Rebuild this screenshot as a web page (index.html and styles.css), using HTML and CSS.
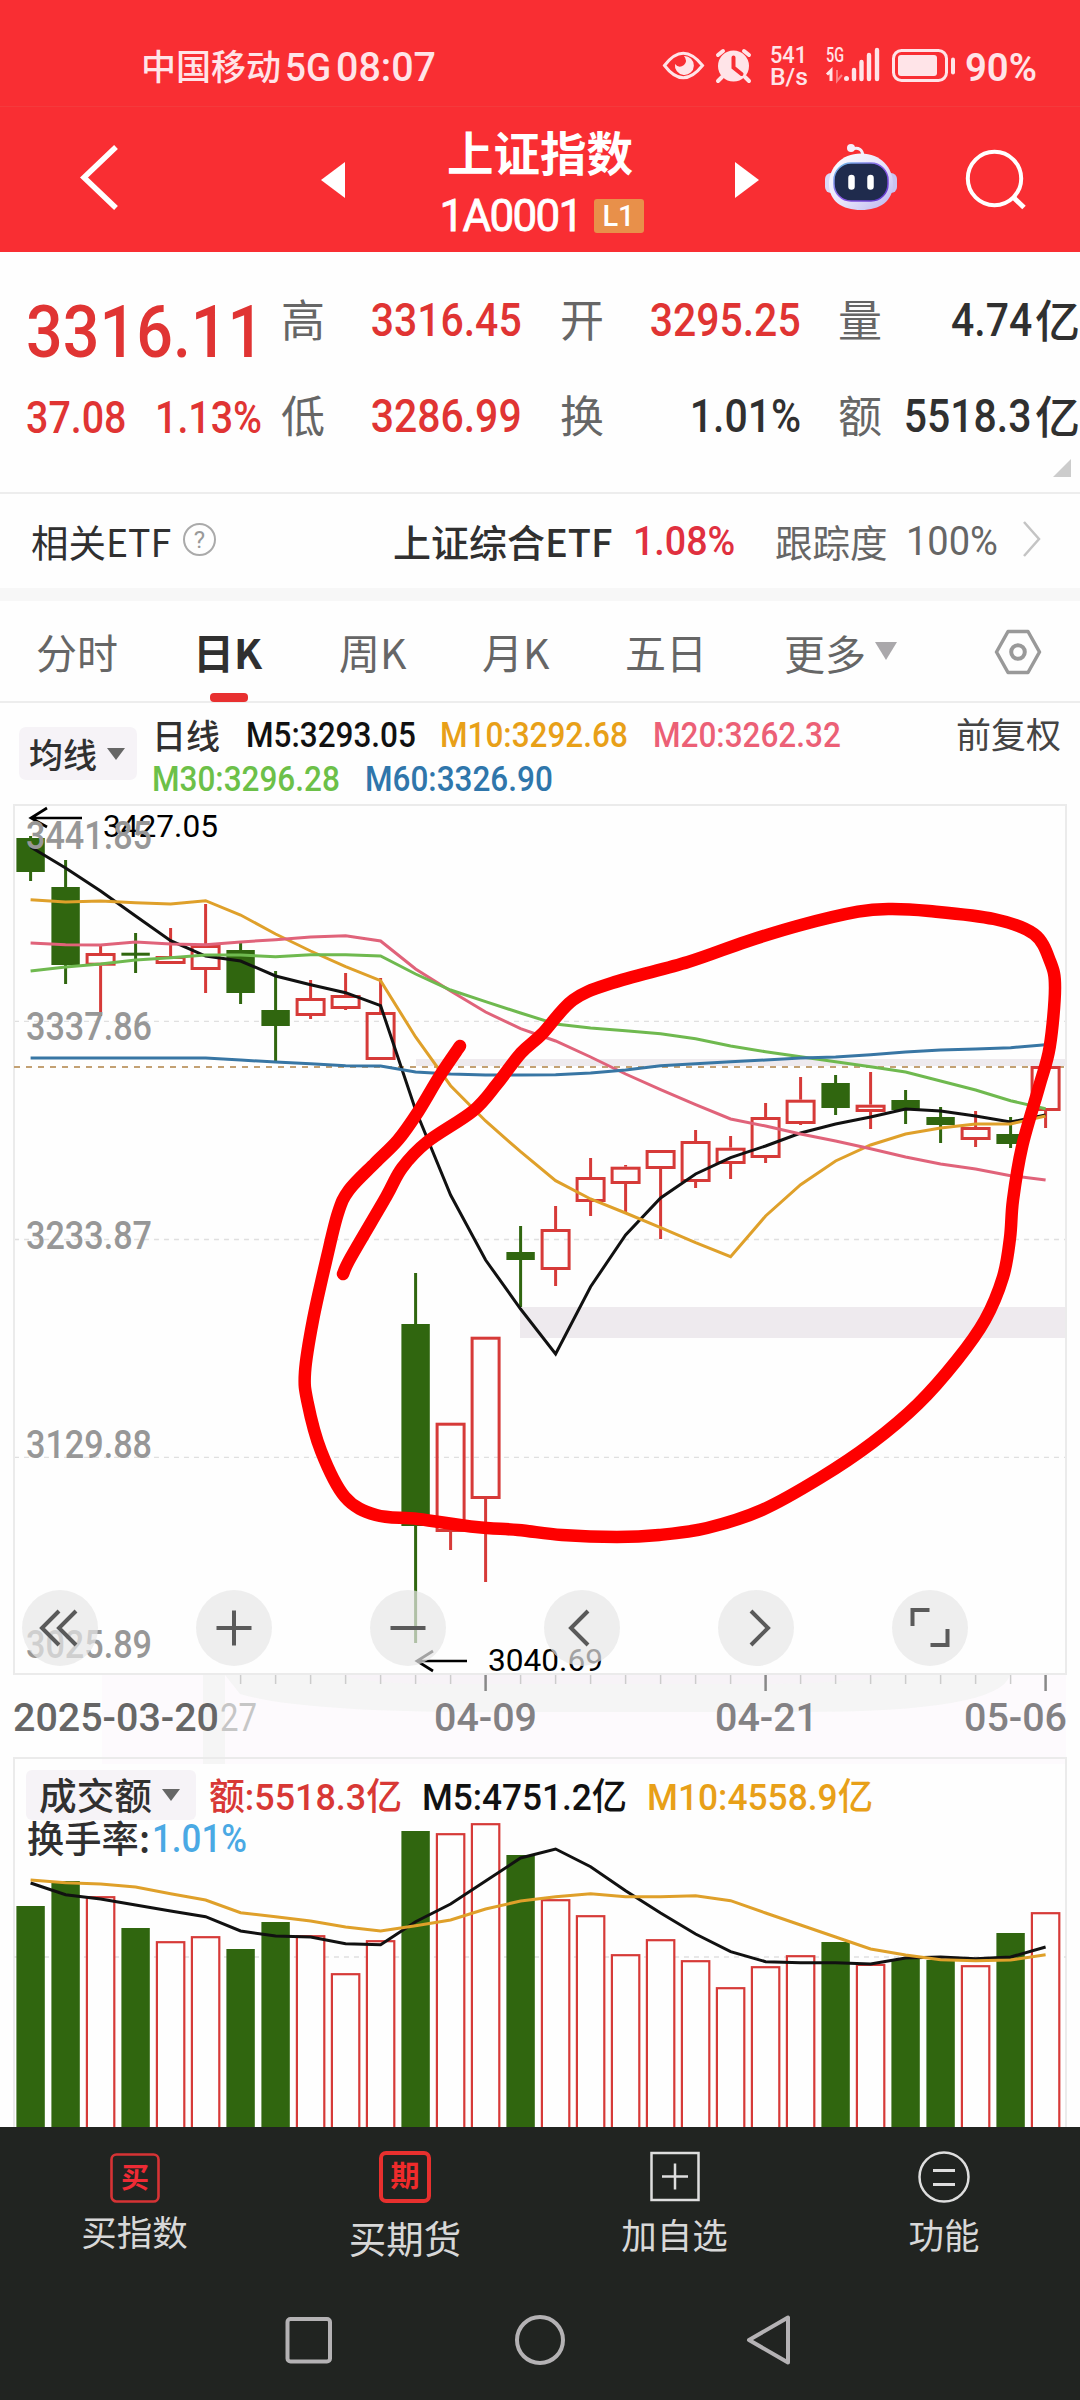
FILE: index.html
```html
<!DOCTYPE html>
<html lang="zh-CN">
<head>
<meta charset="utf-8">
<title>上证指数</title>
<link rel="stylesheet" href="styles.css">
</head>
<body>
<header class="top">
  <div class="status">
    <svg class="status-svg" viewBox="130 30 950 77">
      <g class="pale">
        <text x="141" y="80" font-size="35" textLength="140" lengthAdjust="spacingAndGlyphs" class="cjk">中国移动</text>
        <text x="285" y="81" font-size="39" textLength="46" lengthAdjust="spacingAndGlyphs" class="num">5G</text>
        <text x="336" y="81" font-size="40" textLength="100" lengthAdjust="spacingAndGlyphs" class="num">08:07</text>
        <text x="770" y="63" font-size="24" textLength="37" lengthAdjust="spacingAndGlyphs" class="num">541</text>
        <text x="770" y="85" font-size="24" textLength="38" lengthAdjust="spacingAndGlyphs" class="num">B/s</text>
        <text x="826" y="62" font-size="20" textLength="18" lengthAdjust="spacingAndGlyphs" class="num">5G</text>
        <text x="965" y="81" font-size="39" textLength="72" lengthAdjust="spacingAndGlyphs" class="num heavy">90%</text>
        <path d="M664.500 65.500Q683 41 702.500 65.500Q683 90 664.500 65.500Z" fill="none" stroke="#ffe4e8" stroke-width="3"/>
        <path d="M684 56a9.500 9.500 0 1 1-9 8q4 5 9 1q4-4 0-9Z"/>
        <path d="M722 77l-4 4M745 77l4 4" stroke="#ffe4e8" stroke-width="4" stroke-linecap="round"/>
        <circle cx="733.500" cy="66" r="15.500"/>
        <path d="M718 55l5-4M744 51l5 4" stroke="#ffe4e8" stroke-width="4" stroke-linecap="round"/>
        <path d="M733.500 57.500v10l8 6.500" stroke="#f72e33" stroke-width="4" stroke-linecap="round" fill="none"/>
        <path d="M831 81v-10.500l-4 4" fill="none" stroke="#ffe4e8" stroke-width="3"/>
        <path d="M837 70v11l5-6" fill="none" stroke="#fc8085" stroke-width="2"/>
        <circle cx="846.500" cy="78.500" r="2.500"/>
        <path d="M854 70v9M861.500 62v17M869 55v24M877 50v29" stroke="#ffe4e8" stroke-width="4.400" stroke-linecap="round"/>
        <rect x="893.500" y="50.500" width="53" height="30" rx="8" fill="none" stroke="#ffe4e8" stroke-width="3"/>
        <rect x="898" y="55" width="39" height="21" rx="3"/>
        <path d="M953 59.500v13" stroke="#ffe4e8" stroke-width="4" stroke-linecap="round"/>
      </g>
    </svg>
  </div>
  <nav class="titlebar">
    <svg class="back" viewBox="78 140 44 76"><path d="M116 147 84 177.500 116 208" fill="none" stroke="#fff" stroke-width="5.500"/></svg>
    <svg class="tri" viewBox="0 0 24 36"><path d="M24 0v36L0 18Z" fill="#fff"/></svg>
    <div class="title">
      <h1>上证指数</h1>
      <p><span class="code">1A0001</span><span class="badge">L1</span></p>
    </div>
    <svg class="tri" viewBox="0 0 24 36"><path d="M0 0v36L24 18Z" fill="#fff"/></svg>
    <svg class="robot" viewBox="824 142 74 70">
      <defs>
        <linearGradient id="shell" x1="0" y1="0" x2="1" y2="1"><stop offset="0" stop-color="#fff"/><stop offset=".55" stop-color="#e6e3fb"/><stop offset="1" stop-color="#b9b3ee"/></linearGradient>
        <linearGradient id="rim" x1="0" y1="0" x2="1" y2="1"><stop offset="0" stop-color="#6fc6e8"/><stop offset=".5" stop-color="#8d5be8"/><stop offset="1" stop-color="#5b35c9"/></linearGradient>
      </defs>
      <path d="M852 149q10-3 11 7" fill="none" stroke="#f3effb" stroke-width="3"/>
      <circle cx="851" cy="148" r="4" fill="#f6eefb"/>
      <rect x="825" y="173" width="12" height="20" rx="6" fill="#dcd8f6"/>
      <rect x="885" y="173" width="12" height="20" rx="6" fill="#c9c3f0"/>
      <path d="M861 153.500C881 153.500 893 168 893 184C893 201 880 210 861 210C842 210 829 201 829 184C829 168 841 153.500 861 153.500Z" fill="url(#shell)"/>
      <rect x="834" y="163" width="54" height="38" rx="17" fill="#1f2b4d" stroke="url(#rim)" stroke-width="1.500"/>
      <path d="M851.500 178v8.500M870.500 178v8.500" stroke="#fff" stroke-width="6.500" stroke-linecap="round"/>
    </svg>
    <svg class="search" viewBox="964 148 64 64"><circle cx="994.500" cy="178.500" r="26.700" fill="none" stroke="#fff" stroke-width="4"/><path d="M1013 197 1024 207.500" stroke="#fff" stroke-width="5"/></svg>
  </nav>
</header>

<section class="quote">
  <div class="last"><b class="price red">3316.11</b></div>
  <span class="k">高</span><span class="v red"><i>3316.45</i></span>
  <span class="k">开</span><span class="v red"><i>3295.25</i></span>
  <span class="k">量</span><span class="v"><i>4.74</i><em>亿</em></span>
  <div class="chg red"><i>37.08</i><i>1.13%</i></div>
  <span class="k">低</span><span class="v red"><i>3286.99</i></span>
  <span class="k">换</span><span class="v"><i>1.01%</i></span>
  <span class="k">额</span><span class="v"><i>5518.3</i><em>亿</em></span>
  <svg class="corner" viewBox="0 0 18 18"><path d="M18 0v18H0Z" fill="#ccc"/></svg>
</section>

<section class="etf">
  <span class="etf-name">相关ETF</span><span class="help">?</span>
  <span class="etf-fund">上证综合ETF</span>
  <span class="etf-pct">1.08%</span>
  <span class="etf-track">跟踪度</span>
  <span class="etf-full">100%</span>
  <svg class="chev" viewBox="0 0 20 36"><path d="M2 1 17 18 2 35" fill="none" stroke="#c4c4c4" stroke-width="2.500"/></svg>
</section>

<nav class="tabs">
  <span>分时</span><span class="on">日K</span><span>周K</span><span>月K</span><span>五日</span>
  <span class="more">更多<svg viewBox="0 0 22 18"><path d="M0 0h22L11 18Z" fill="#aaa8ab"/></svg></span>
  <svg class="hex" viewBox="0 0 48 46"><path d="M14 2.500h20L45.500 23 34 43.500H14L2.500 23Z" fill="none" stroke="#999" stroke-width="3.500" stroke-linejoin="round"/><circle cx="24" cy="23" r="6.800" fill="none" stroke="#999" stroke-width="4"/></svg>
</nav>

<section class="legend">
  <div class="pick">均线<svg viewBox="0 0 18 12"><path d="M0 0h18L9 12Z" fill="#666"/></svg></div>
  <div class="mas">
    <div class="r1"><span class="lbl">日线</span><i class="m5">M5:3293.05</i><i class="m10">M10:3292.68</i><i class="m20">M20:3262.32</i></div>
    <div class="r2"><i class="m30">M30:3296.28</i><i class="m60">M60:3326.90</i></div>
  </div>
  <span class="adj">前复权</span>
</section>

<section class="chart">
  <svg id="kline" viewBox="0 804 1080 946"></svg>
  <div class="tools">
    <button><svg viewBox="-38 -38 76 76"><path d="M-1-17-18 0-1 17M16-17-1 0 16 17"/></svg></button>
    <button><svg viewBox="-38 -38 76 76"><path d="M-17.500 0h35M0-17.500v35"/></svg></button>
    <button><svg viewBox="-38 -38 76 76"><path d="M-17.500 0h35"/></svg></button>
    <button><svg viewBox="-38 -38 76 76"><path d="M6-17-11 0 6 17"/></svg></button>
    <button><svg viewBox="-38 -38 76 76"><path d="M-5-17 12 0-5 17"/></svg></button>
    <button><svg viewBox="-38 -38 76 76"><path d="M-17.500-2v-16h17M17.500 1v16h-17"/></svg></button>
  </div>
</section>
<section class="volume"><svg id="vol" viewBox="0 1750 1080 377"></svg></section>

<footer class="dock">
  <div class="actions">
    <div><svg viewBox="0 0 52 54"><rect x="2.500" y="5.500" width="47" height="47" rx="5" fill="none" stroke="#d63335" stroke-width="2.600"/><text x="26" y="39" font-size="28" text-anchor="middle" class="cjk bold" fill="#ef2b35">买</text></svg><span>买指数</span></div>
    <div class="big"><svg viewBox="0 0 52 54"><rect x="2" y="4" width="48" height="48" rx="5" fill="none" stroke="#e8302e" stroke-width="4"/><text x="26" y="38" font-size="29" text-anchor="middle" class="cjk bold" fill="#ef2b2b">期</text></svg><span>买期货</span></div>
    <div class="mid"><svg viewBox="0 0 52 54"><path d="M2.500 4h47v47h-47ZM26 14.500v26M13 27.500h26" fill="none" stroke="#dedede" stroke-width="2.500"/></svg><span>加自选</span></div>
    <div class="mid"><svg viewBox="0 0 52 54"><circle cx="26" cy="28" r="24.500" fill="none" stroke="#dedede" stroke-width="2.500"/><path d="M15 21.500h22M15 35.500h22" stroke="#dedede" stroke-width="3"/></svg><span>功能</span></div>
  </div>
  <div class="sys">
    <svg viewBox="0 0 52 52"><rect x="5.500" y="5" width="42.500" height="42.500" rx="3" /></svg>
    <svg viewBox="0 0 52 52"><circle cx="26" cy="26" r="23"/></svg>
    <svg viewBox="0 0 52 52"><path d="M42 3.500v45L3 26Z" stroke-linejoin="round"/></svg>
  </div>
</footer>
<script src="chart.js"></script>
</body>
</html>
```
FILE: styles.css
```css
* { box-sizing: border-box; margin: 0; padding: 0; }
body {
  width: 1080px; height: 2400px; overflow: hidden; background: #fefefe; color: #303030;
  font-family: "Noto Sans CJK SC", sans-serif; display: flex; flex-direction: column;
}
svg { display: block; }
i, em { font-style: normal; }
.cjk { font-family: "Noto Sans CJK SC", sans-serif; font-weight: 500; }
.bold { font-weight: 700; }
.num { font-family: Roboto, sans-serif; font-weight: 500; }
.thin { font-weight: 400; }
.heavy { font-weight: 600; }
.pale { fill: #ffe4e8; }
.red { color: #e03433 !important; }

.top { height: 252px; background: #f92e33; flex: none; }
.status { height: 107px; padding: 30px 0 0 130px; border-bottom: 1px solid #f53a3c; }
.status-svg { width: 950px; height: 77px; }
.titlebar {
  height: 145px; display: grid; align-items: start;
  grid-template-columns: 243px 24px 390px 24px 87px 140px 64px; padding-left: 78px;
  color: #fff;
}
.back { width: 44px; height: 76px; margin-top: 33px; }
.tri { width: 24px; height: 36px; margin-top: 55px; }
.robot { width: 74px; height: 70px; margin: 35px 0 0 -22px; grid-column: 6; }
.search { width: 64px; height: 64px; margin-top: 41px; grid-column: 7; margin-left: -22px; }
.title { text-align: center; padding-top: 14px; }
.title h1 { font-size: 46.5px; line-height: 60px; font-weight: 700; }
.title p { display: flex; align-items: center; justify-content: center; gap: 15px; height: 34px; margin: 18px 0 0 3px; }
.code { font: 400 44px/36px Roboto, sans-serif; width: 139px; letter-spacing: -1.7px; -webkit-text-stroke: .8px #fff; text-align: left; }
.badge { width: 50px; height: 34px; border-radius: 3px; background: #e8904a; font: 500 29px/35px Roboto, sans-serif; }

.quote {
  height: 242px; flex: none; border-bottom: 2px solid #ededed; padding-left: 26px; display: grid;
  grid-template-columns: 257px 42px 197px 40px 42px 197px 39px 42px 198px;
  grid-template-rows: 96px 96px 1fr; padding-top: 19px; align-items: center; white-space: nowrap;
}
.quote .k { font-size: 44px; line-height: 60px; color: #666; width: 44px; margin: -2px 0 0 -2px; }
.quote .v { text-align: right; display: flex; justify-content: flex-end; align-items: center; padding-top: 2px; }
.quote .k:nth-of-type(1) { grid-column: 2; }
.quote i { font: 500 46px/54px Roboto, sans-serif; display: inline-block; transform: scaleX(.89); transform-origin: right; }
.quote em { font-size: 45px; line-height: 54px; font-weight: 500; margin: -3px 0 0 3px; }
.quote .k:nth-child(4), .quote .k:nth-child(11) { grid-column: 5; }
.quote .k:nth-child(6), .quote .k:nth-child(13) { grid-column: 8; }
.price { font: 500 73px/80px Roboto, sans-serif; display: inline-block; transform: scaleX(.885); transform-origin: left; margin-top: 25px; }
.chg { display: grid; grid-template-columns: 129px auto; padding-top: 6px; }
.chg i { font-size: 45px; transform: scaleX(.875); transform-origin: left; justify-self: start; }
.corner { width: 18px; height: 18px; grid-column: 9; justify-self: end; align-self: start; margin: -4px 9px 0 0; }

.etf {
  height: 107px; flex: none; border-bottom: 13px solid #f7f7f7; padding-left: 31px; display: grid; align-items: center;
  grid-template-columns: 152px 210px 240px 142px 131px 116px 20px; white-space: nowrap; font-size: 36px; line-height: 50px;
}
.etf-name { font-size: 37.5px; }
.help { width: 33px; height: 33px; border: 2px solid #aaa; border-radius: 50%; font: 400 24px/30px Roboto, sans-serif; color: #999; text-align: center; margin-top: -4px; }
.etf-fund { font-weight: 500; font-size: 38px; }
.etf-pct, .etf-full { font: 500 40px/50px Roboto, sans-serif; transform: scaleX(.94); transform-origin: left; color: #e0303f; padding-top: 2px; }
.etf-full { font-weight: 400; color: #666; font-size: 40px; transform: scaleX(.95); }
.etf-track { font-size: 37.5px; color: #666; }
.chev { width: 20px; height: 36px; margin-top: -4px; }

.tabs {
  height: 102px; flex: none; border-bottom: 2px solid #ededed; padding-left: 36px; display: grid; align-items: center;
  grid-template-columns: 157px 146px 143px 143px 159px 210px 48px; font-size: 41px; line-height: 98px; color: #666; white-space: nowrap;
}
.tabs span { height: 101px; padding-top: 1px; }
.tabs .on { font-weight: 700; color: #303030; display: flex; flex-direction: column; }
.tabs .on::after { content: ""; width: 38px; height: 9px; border-radius: 4px; background: #e83030; margin: -7px 0 0 17px; flex: none; }
.more { display: flex; align-items: center; gap: 9px; }
.more svg { width: 22px; height: 18px; margin-top: -3px; }
.hex { width: 48px; height: 46px; }

.legend { height: 101px; flex: none; display: grid; grid-template-columns: 133px 805px auto; padding-left: 19px; white-space: nowrap; }
.pick { width: 118px; height: 53px; border-radius: 7px; background: #f6f3f7; margin-top: 24px; padding-left: 10px; display: flex; align-items: center; gap: 10px; font-size: 34px; line-height: 50px; font-weight: 500; }
.pick svg { width: 18px; height: 12px; }
.mas { font-size: 34px; padding-top: 10px; }
.r1, .r2 { display: grid; grid-template-columns: 94px 194px 213px auto; line-height: 46px; height: 44px; align-items: center; }
.r2 { grid-template-columns: 213px auto; }
.lbl { font-weight: 500; margin-top: -3px; }
.mas i { font: 500 35px/46px Roboto, sans-serif; transform: scaleX(.9); transform-origin: left; justify-self: start; }
.m5 { color: #111; } .m10 { color: #e8a018; } .m20 { color: #ec6076; } .m30 { color: #6cc048; } .m60 { color: #2f76ab; }
.adj { font-size: 35px; line-height: 46px; padding-top: 7px; margin-left: -1px; color: #444; }

.chart { height: 946px; flex: none; position: relative; }
#kline { width: 1080px; height: 946px; }
.tools { position: absolute; left: 22px; top: 786px; display: flex; gap: 98px; }
.tools button { width: 76px; height: 76px; border: 0; border-radius: 50%; background: rgba(231,231,231,.7); }
.tools path { fill: none; stroke: #5a5a5a; stroke-width: 4; }
.volume { height: 377px; flex: none; }
#vol { width: 1080px; height: 377px; }

.dock { height: 273px; flex: none; background: #212421; }
.actions { display: grid; grid-template-columns: 269px 272px 267px 272px; height: 160px; padding-top: 22px; }
.actions div { display: flex; flex-direction: column; align-items: center; color: #d8d8d8; font-size: 35.5px; line-height: 44px; gap: 6px; }
.actions svg { width: 52px; height: 54px; }
.actions .big { font-size: 37.5px; gap: 12px; }
.actions .mid { gap: 9px; }
.sys { display: flex; gap: 180px; padding: 27px 0 0 282px; }
.sys svg { width: 52px; height: 52px; fill: none; stroke: #b4b2b4; stroke-width: 4; }
```
FILE: chart.js
```js
const X = i => 30.6 + 35 * i;
const GREEN = '#30660f', RED = '#d63a38';

// [rising, body top, body bottom, wick top, wick bottom]
const candles = [
  [0,838,872,836,881],[0,887,965,860,984],[1,953,965.7,945.7,1016],[0,952.7,955.7,933,973],[1,956,964,928,964],
  [1,945,970,904,993],[0,950,993,943,1004],[0,1010,1026,971,1061],[1,998,1016,980,1019],[1,995,1009,973,1010],
  [1,1012,1060,978,1060],[0,1324,1526,1273,1643],[1,1422.7,1532,1422.7,1550],[1,1336.7,1499,1336.7,1582],[0,1252,1260,1226,1307],
  [1,1229,1270,1206,1286],[1,1177,1202,1158,1216],[1,1166.7,1184,1165,1212],[1,1150,1169,1150,1239],[1,1141,1182,1130,1188],
  [1,1147.7,1164,1136,1179],[1,1117,1158,1103,1163],[1,1099.7,1124,1077,1125],[0,1083,1108,1075,1115],[1,1104.7,1112,1072,1129],
  [0,1100,1110,1090,1124],[0,1117,1125,1107,1143],[1,1127,1140,1111,1147],[0,1134,1144,1117,1148],[1,1066,1111,1066,1128]
];
const averages = {
  '#111': [847,868,891,916,940.7,956,961,976,984.7,992.7,1005.7,1110,1195,1260,1309,1354,1286.7,1235,1198,1174,1157.7,1146,1133,1124,1117,1109,1111,1116,1122,1115],
  '#dfa02a': [899.7,902,901,902.7,904,900.7,915,934,951,966.7,980.7,1037,1085.7,1121,1151.7,1180.7,1199,1213,1227.7,1242.7,1256.7,1216,1184.7,1161,1145,1134,1128,1124,1124,1116],
  '#e0637a': [943,944.7,945,942,944,944.7,942,939.7,937,935.7,941,969,991,1012,1028.7,1041,1057,1074,1089.7,1104.7,1119,1126,1134,1141,1148.7,1157,1164,1169,1175.7,1180],
  '#6fb94f': [971,967,964,960,957.7,955,955,956.7,954.7,954.7,956,974,990,1001.7,1013,1024,1028,1030.7,1033.7,1038.7,1046,1051.7,1056.7,1061.7,1066.7,1072,1081,1090,1100.7,1108.7],
  '#3876a4': [1058,1058,1058,1058,1058,1058,1060,1062,1063.7,1065.7,1066,1072,1074,1075,1075,1074.7,1073,1070,1065.7,1063.7,1061.7,1060,1058,1057,1054.7,1052,1050,1049,1047.7,1044.7]
};
// [rising, bar top]
const volumes = [[0,1906],[0,1881],[1,1896],[0,1928],[1,1941],[1,1936],[0,1949],[0,1922],[1,1935],[1,1973],[1,1940],[0,1831],[1,1833],[1,1823],[0,1855],
  [1,1899],[1,1915],[1,1954],[1,1939],[1,1960],[1,1987],[1,1966],[1,1955],[0,1942],[1,1963.7],[0,1959],[0,1960],[1,1965],[0,1933],[1,1912]];
const volAverages = {
  '#111': [1883,1894.7,1899,1905,1911,1916.7,1931,1936,1937,1943.7,1944.7,1921.7,1904,1881,1858,1849,1866.7,1890.7,1913,1934,1951.7,1961.7,1962.7,1962.7,1964,1958,1957,1958.7,1957,1947],
  '#dfa02a': [1880,1882.7,1884,1887,1893.7,1900,1912.7,1916.7,1921,1927,1931,1925.7,1920,1909,1901,1896.7,1893.7,1896.7,1896.7,1895.7,1900.7,1913,1925,1937,1949,1955,1959.7,1960.7,1960,1954.7]
};
// freehand annotation
const pen = [[460,1046],[439,1077],[418,1112],[398,1140],[375,1163],[349,1190],[338,1213],[327,1257],[313,1320],[305,1372],[307.5,1402],[321,1451],[345,1497],[376,1515],[418,1519],[476,1527],[518,1530],[562,1535],[617,1537],[659,1535],[707,1528],[762,1510],[820,1478],[872,1443],[918,1404],[957,1360],[985,1320],[1003,1277],[1010,1238],[1013,1200],[1022,1147],[1039,1087],[1049.7,1047],[1055,988],[1050,961],[1034,934],[994,919],[929,911],[890,909],[858,911.7],[801,925],[746,941.7],[688,962],[612,983],[573,1000],[542,1034],[521,1053],[497,1084],[473,1111],[427,1142],[402,1168],[386,1197],[351,1257],[343,1274]];

const line = (x1, y1, x2, y2, c, w, extra = '') => `<line x1="${x1}" y1="${y1}" x2="${x2}" y2="${y2}" stroke="${c}" stroke-width="${w}" ${extra}/>`;
const poly = (ys, c) => `<polyline points="${ys.map((y, i) => X(i) + ',' + y).join(' ')}" fill="none" stroke="${c}" stroke-width="3"/>`;
const rect = (x, y, w, h, c) => `<rect x="${x}" y="${y}" width="${w}" height="${h}" fill="${c}"/>`;
const text = (s, x, y, size, len, c, cls = 'num') => `<text x="${x}" y="${y}" font-size="${size}" fill="${c}" class="${cls}" textLength="${len}" lengthAdjust="spacingAndGlyphs">${s}</text>`;
const curve = p => {
  let d = `M${p[0]}`;
  for (let i = 0; i < p.length - 1; i++) {
    const a = p[i - 1] || p[i], b = p[i], c = p[i + 1], e = p[i + 2] || c;
    d += `C${b[0] + (c[0] - a[0]) / 6} ${b[1] + (c[1] - a[1]) / 6} ${c[0] - (e[0] - b[0]) / 6} ${c[1] - (e[1] - b[1]) / 6} ${c}`;
  }
  return d;
};

let k = '';
k += rect(102, 1675, 964, 75, '#fdfafd');
k += `<path d="M225 1675H1010Q1000 1712 800 1712H480Q300 1712 240 1694Z" fill="#f5f5f5"/>`;
k += `<path d="M340 1675H890Q840 1684 760 1684H440Q370 1684 340 1675Z" fill="#f7f3f7"/>`;
k += rect(203, 1675, 22, 75, '#f5f5f5');
k += rect(416, 1059, 650, 7, '#eeeaee') + rect(520, 1307, 547, 31, '#eeeaee');
[1021.3, 1239.5, 1457.3].forEach(y => k += line(14, y, 1066, y, '#e0e0e0', 1.3, 'stroke-dasharray="5 5"'));
k += `<rect x="14" y="805" width="1052" height="869" fill="none" stroke="#ebebeb" stroke-width="2"/>`;
k += line(14, 1067, 1066, 1067, '#c3a173', 2, 'stroke-dasharray="6 6"');
candles.forEach(([up, t, b, wt, wb], i) => {
  const x = X(i), c = up ? RED : GREEN;
  if (up) {
    k += line(x, wt, x, t, c, 3) + line(x, b, x, wb, c, 3);
    k += `<rect x="${x - 13.5}" y="${t + 1.5}" width="27" height="${b - t - 3}" fill="none" stroke="${c}" stroke-width="3"/>`;
  } else k += line(x, wt, x, wb, c, 3) + rect(x - 14.2, t, 28.4, b - t, c);
});
for (const c in averages) k += poly(averages[c], c);
k += `<path d="M47 808 31 818 47 827M31 818H82M433 1651 417 1661 433 1671M417 1661H467" fill="none" stroke="#000" stroke-width="2.7"/>`;
k += text('3427.05', 103, 837, 32, 115, '#000', 'num thin') + text('3040.69', 488, 1671, 32, 115, '#000', 'num thin');
[['3441.85', 849], ['3337.86', 1040], ['3233.87', 1249], ['3129.88', 1458], ['3025.89', 1658]].forEach(([s, y]) => k += text(s, 26, y, 38, 126, '#979797'));
for (let i = 6; i < 30; i++) k += i % 8 === 5 ? line(X(i), 1675, X(i), 1691, '#888', 2.5) : line(X(i), 1675, X(i), 1684, '#ccc', 1.5);
k += text('2025-03-20', 13, 1731, 38, 206, '#666') + text('27', 220, 1731, 38, 37, '#c6c6c6', 'num thin');
k += text('04-09', 434, 1731, 38, 103, '#838184') + text('04-21', 715, 1731, 38, 103, '#838184') + text('05-06', 964, 1731, 38, 103, '#838184');
k += `<path d="${curve(pen)}" fill="none" stroke="#fe0000" stroke-width="12.5" stroke-linecap="round" stroke-linejoin="round"/>`;
document.getElementById('kline').innerHTML = k;

let v = rect(102, 1750, 964, 14, '#fdfafd') + rect(203, 1750, 22, 14, '#f5f5f5');
v += `<path d="M14 2127V1758H1066V2127" fill="none" stroke="#ebebeb" stroke-width="2"/>`;
v += line(14, 1957, 1066, 1957, '#e0e0e0', 1.3, 'stroke-dasharray="5 5"');
volumes.forEach(([up, t], i) => {
  const x = X(i), h = 2130 - t;
  v += up ? `<rect x="${x - 13.7}" y="${t + 1.2}" width="27.4" height="${h}" fill="#fefefe" stroke="${RED}" stroke-width="2.2"/>` : rect(x - 14.2, t, 28.4, h, GREEN);
});
for (const c in volAverages) v += poly(volAverages[c], c);
v += `<rect x="26" y="1770" width="170" height="50" rx="6" fill="#f6f3f7"/><path d="M162 1789h18l-9 12Z" fill="#666"/>`;
v += text('成交额', 39, 1810, 37, 113, '#303030', 'cjk');
v += text('额:5518.3亿', 209, 1810, 37, 193, '#d83835', 'mix');
v += text('M5:4751.2亿', 422, 1810, 37, 205, '#111', 'mix');
v += text('M10:4558.9亿', 647, 1810, 37, 226, '#e8a018', 'mix');
v += text('换手率:', 27, 1853, 37, 123, '#303030', 'cjk') + text('1.01%', 152, 1852, 38, 95, '#4aa9e4');
v = v.replaceAll('class="mix"', 'style="font-family:Roboto,\'Noto Sans CJK SC\',sans-serif;font-weight:500"');
document.getElementById('vol').innerHTML = v;
```
